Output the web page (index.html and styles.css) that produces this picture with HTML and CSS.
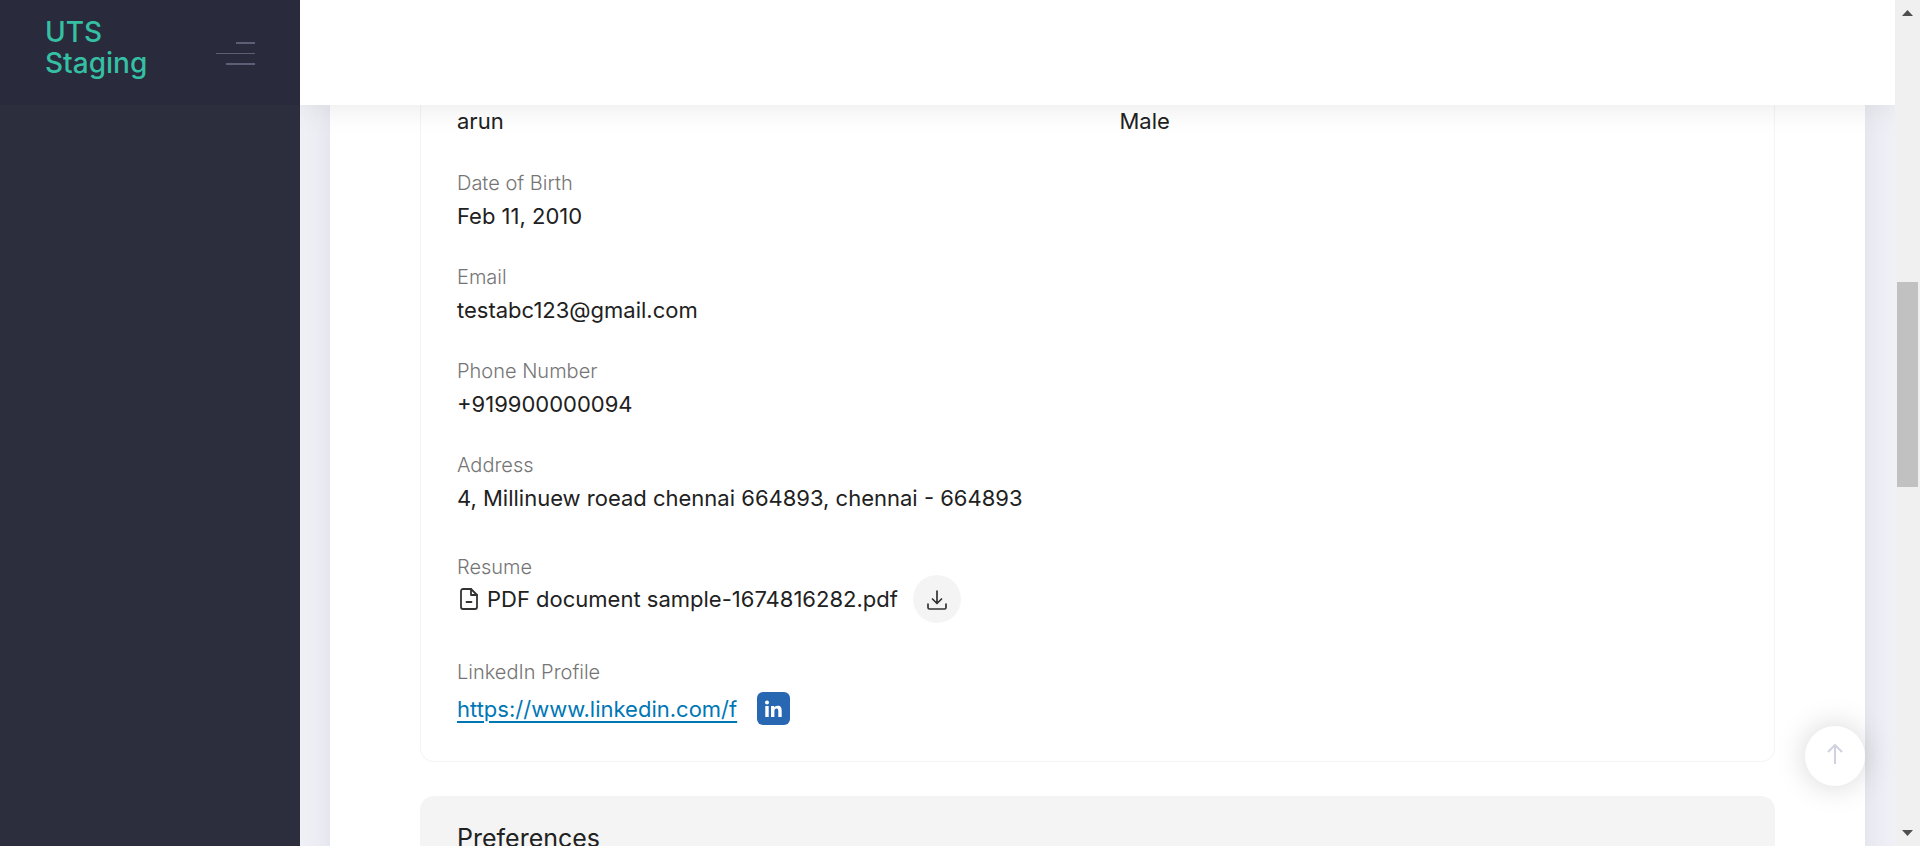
FILE: index.html
```html
<!DOCTYPE html>
<html lang="en">
<head>
<meta charset="utf-8">
<title>UTS Staging</title>
<link rel="stylesheet" href="styles.css">
</head>
<body>
<div class="app">
  <aside class="sidebar">
    <div class="brand">
      <a class="brand-name" href="#">UTS Staging</a>
      <button class="menu-toggle" type="button" aria-label="Toggle menu">
        <span class="bar bar-short"></span>
        <span class="bar bar-long"></span>
        <span class="bar bar-mid"></span>
      </button>
    </div>
  </aside>
  <div class="page">
    <header class="topbar"></header>
    <main class="content">
      <div class="card">
        <section class="panel">
          <div class="columns">
            <div class="value">arun</div>
            <div class="value">Male</div>
          </div>
          <dl class="fields">
            <div class="field"><dt class="label">Date of Birth</dt><dd class="value">Feb 11, 2010</dd></div>
            <div class="field"><dt class="label">Email</dt><dd class="value">testabc123@gmail.com</dd></div>
            <div class="field"><dt class="label">Phone Number</dt><dd class="value">+919900000094</dd></div>
            <div class="field"><dt class="label">Address</dt><dd class="value">4, Millinuew roead chennai 664893, chennai - 664893</dd></div>
            <div class="field field-resume">
              <dt class="label">Resume</dt>
              <dd class="value value-file">
                <svg class="file-icon" viewBox="0 0 24 24" fill="none" stroke="#333" stroke-width="1.800" stroke-linejoin="round" stroke-linecap="round"><path d="M14 2H6a2 2 0 0 0-2 2v16a2 2 0 0 0 2 2h12a2 2 0 0 0 2-2V8z"/><path d="M14 2v6h6M9.500 15h5"/></svg>
                <span class="file-name">PDF document sample-1674816282.pdf</span>
                <button class="download" type="button" aria-label="Download resume">
                  <svg class="download-icon" viewBox="0 0 20 20" fill="none" stroke="#333" stroke-width="1.700" stroke-linejoin="round" stroke-linecap="round"><path d="M10 1v12M5.500 9l4.500 4.500L14.500 9M1 14v3.500a1.500 1.500 0 0 0 1.500 1.500h15a1.500 1.500 0 0 0 1.500-1.500V14"/></svg>
                </button>
              </dd>
            </div>
            <div class="field field-link">
              <dt class="label">LinkedIn Profile</dt>
              <dd class="value value-link">
                <a class="profile-link" href="#">https://www.linkedin.com/f</a>
                <svg class="linkedin" viewBox="0 0 33 33"><rect width="33" height="33" rx="6" fill="#2867b2"/><g fill="#fff"><circle cx="10" cy="10.500" r="2"/><path d="M8.300 14h3.400v11H8.300zM14 14h3.200v1.500c.7-1.100 1.900-1.800 3.500-1.800 3.200 0 4 2 4 5V25h-3.400v-5.600c0-1.500-.2-2.800-1.800-2.800s-2.100 1.300-2.100 2.800V25H14z"/></g></svg>
              </dd>
            </div>
          </dl>
        </section>
        <section class="panel-heading"><h2 class="heading">Preferences</h2></section>
      </div>
    </main>
  </div>
  <div class="scrollbar">
    <svg class="arrow" viewBox="0 0 11 6"><path d="M5.500 0L11 6H0z" fill="#4f4f4f"/></svg>
    <div class="track"><div class="thumb"></div></div>
    <svg class="arrow" viewBox="0 0 11 6"><path d="M0 0h11L5.500 6z" fill="#4f4f4f"/></svg>
  </div>
  <button class="to-top" type="button" aria-label="Back to top">
    <svg class="to-top-icon" viewBox="0 0 16 20" fill="none" stroke="#d1d1e0" stroke-width="2"><path d="M8 20V1M1 8l7-7 7 7"/></svg>
  </button>
</div>
</body>
</html>
```
FILE: styles.css
```css
* { box-sizing: border-box; }
body {
  margin: 0;
  overflow: hidden;
  background: #f0f1f7;
  color: #212121;
  font-family: "Inter", "Liberation Sans", sans-serif;
}
button { border: 0; padding: 0; cursor: pointer; font: inherit; }
.app { position: relative; display: flex; height: 100vh; }

.sidebar { flex: 0 0 300px; background: #2c2e3e; }
.brand {
  display: flex;
  justify-content: space-between;
  height: 105px;
  padding: 17px 45px 0;
  background: #292a3c;
}
.brand-name {
  width: 120px;
  color: #35bfa3;
  font-size: 28px;
  font-weight: 500;
  line-height: 31px;
  text-decoration: none;
}
.menu-toggle {
  display: flex;
  flex-direction: column;
  align-items: flex-end;
  gap: 9px;
  width: 39px;
  padding-top: 25px;
  background: none;
}
.bar { height: 2px; background: #5d5f76; }
.bar-short { width: 19px; }
.bar-long { width: 39px; height: 1px; }
.bar-mid { width: 29px; }

.page { flex: 1; display: flex; flex-direction: column; min-width: 0; overflow: hidden; }
.topbar {
  position: relative;
  flex: 0 0 105px;
  background: #fff;
  box-shadow: 0 0 30px rgba(0, 0, 0, 0.1);
}
.content { flex: 1; min-height: 0; padding: 0 30px; }
.card {
  min-height: 100%;
  padding: 0 90px;
  background: #fff;
  box-shadow: 0 0 30px rgba(60, 60, 80, 0.1);
}
.panel {
  padding: 1px 36px 36px;
  border: solid #f4f4f4;
  border-width: 0 1px 1px;
  border-radius: 0 0 14px 14px;
}
.columns { display: grid; grid-template-columns: 1fr 1fr; column-gap: 44px; }
.fields { margin: 0; padding-top: 1px; }
.field { display: flex; flex-direction: column; gap: 4px; margin-top: 33px; }
.label { color: #757575; font-size: 20px; font-weight: 300; line-height: 27px; }
.value { margin: 0; font-size: 22px; line-height: 30px; }
.field-resume { gap: 0; margin-top: 41px; }
.value-file { display: flex; align-items: center; height: 36px; }
.file-icon { width: 24px; height: 24px; margin-right: 6px; }
.download {
  display: grid;
  place-items: center;
  width: 48px;
  height: 48px;
  margin-left: 15px;
  border-radius: 50%;
  background: #f4f4f4;
}
.download-icon { width: 20px; height: 20px; margin-top: 2px; }
.field-link { gap: 6px; margin-top: 42px; }
.value-link { display: flex; align-items: center; gap: 20px; height: 33px; }
.profile-link { color: #0077b5; text-decoration: underline; text-underline-offset: 4px; text-decoration-thickness: 2px; }
.linkedin { width: 33px; height: 33px; }
.panel-heading { margin-top: 34px; padding: 24px 37px; border-radius: 14px 14px 0 0; background: #f4f4f4; }
.heading { margin: 0; font-size: 25px; font-weight: 400; line-height: 36px; }

.scrollbar {
  position: relative;
  display: flex;
  flex: 0 0 25px;
  flex-direction: column;
  align-items: center;
  padding: 10px 2px;
  background: #f0f0f0;
}
.arrow { width: 11px; height: 6px; }
.track { flex: 1; width: 100%; padding-top: 266px; }
.thumb { height: 205px; background: #c1c1c1; }

.to-top {
  position: absolute;
  right: 55px;
  bottom: 60px;
  display: grid;
  place-items: center;
  width: 60px;
  height: 60px;
  border-radius: 50%;
  background: #fff;
  box-shadow: 0 0 30px rgba(0, 0, 0, 0.17);
}
.to-top-icon { width: 16px; height: 20px; margin-bottom: 4px; }
```
